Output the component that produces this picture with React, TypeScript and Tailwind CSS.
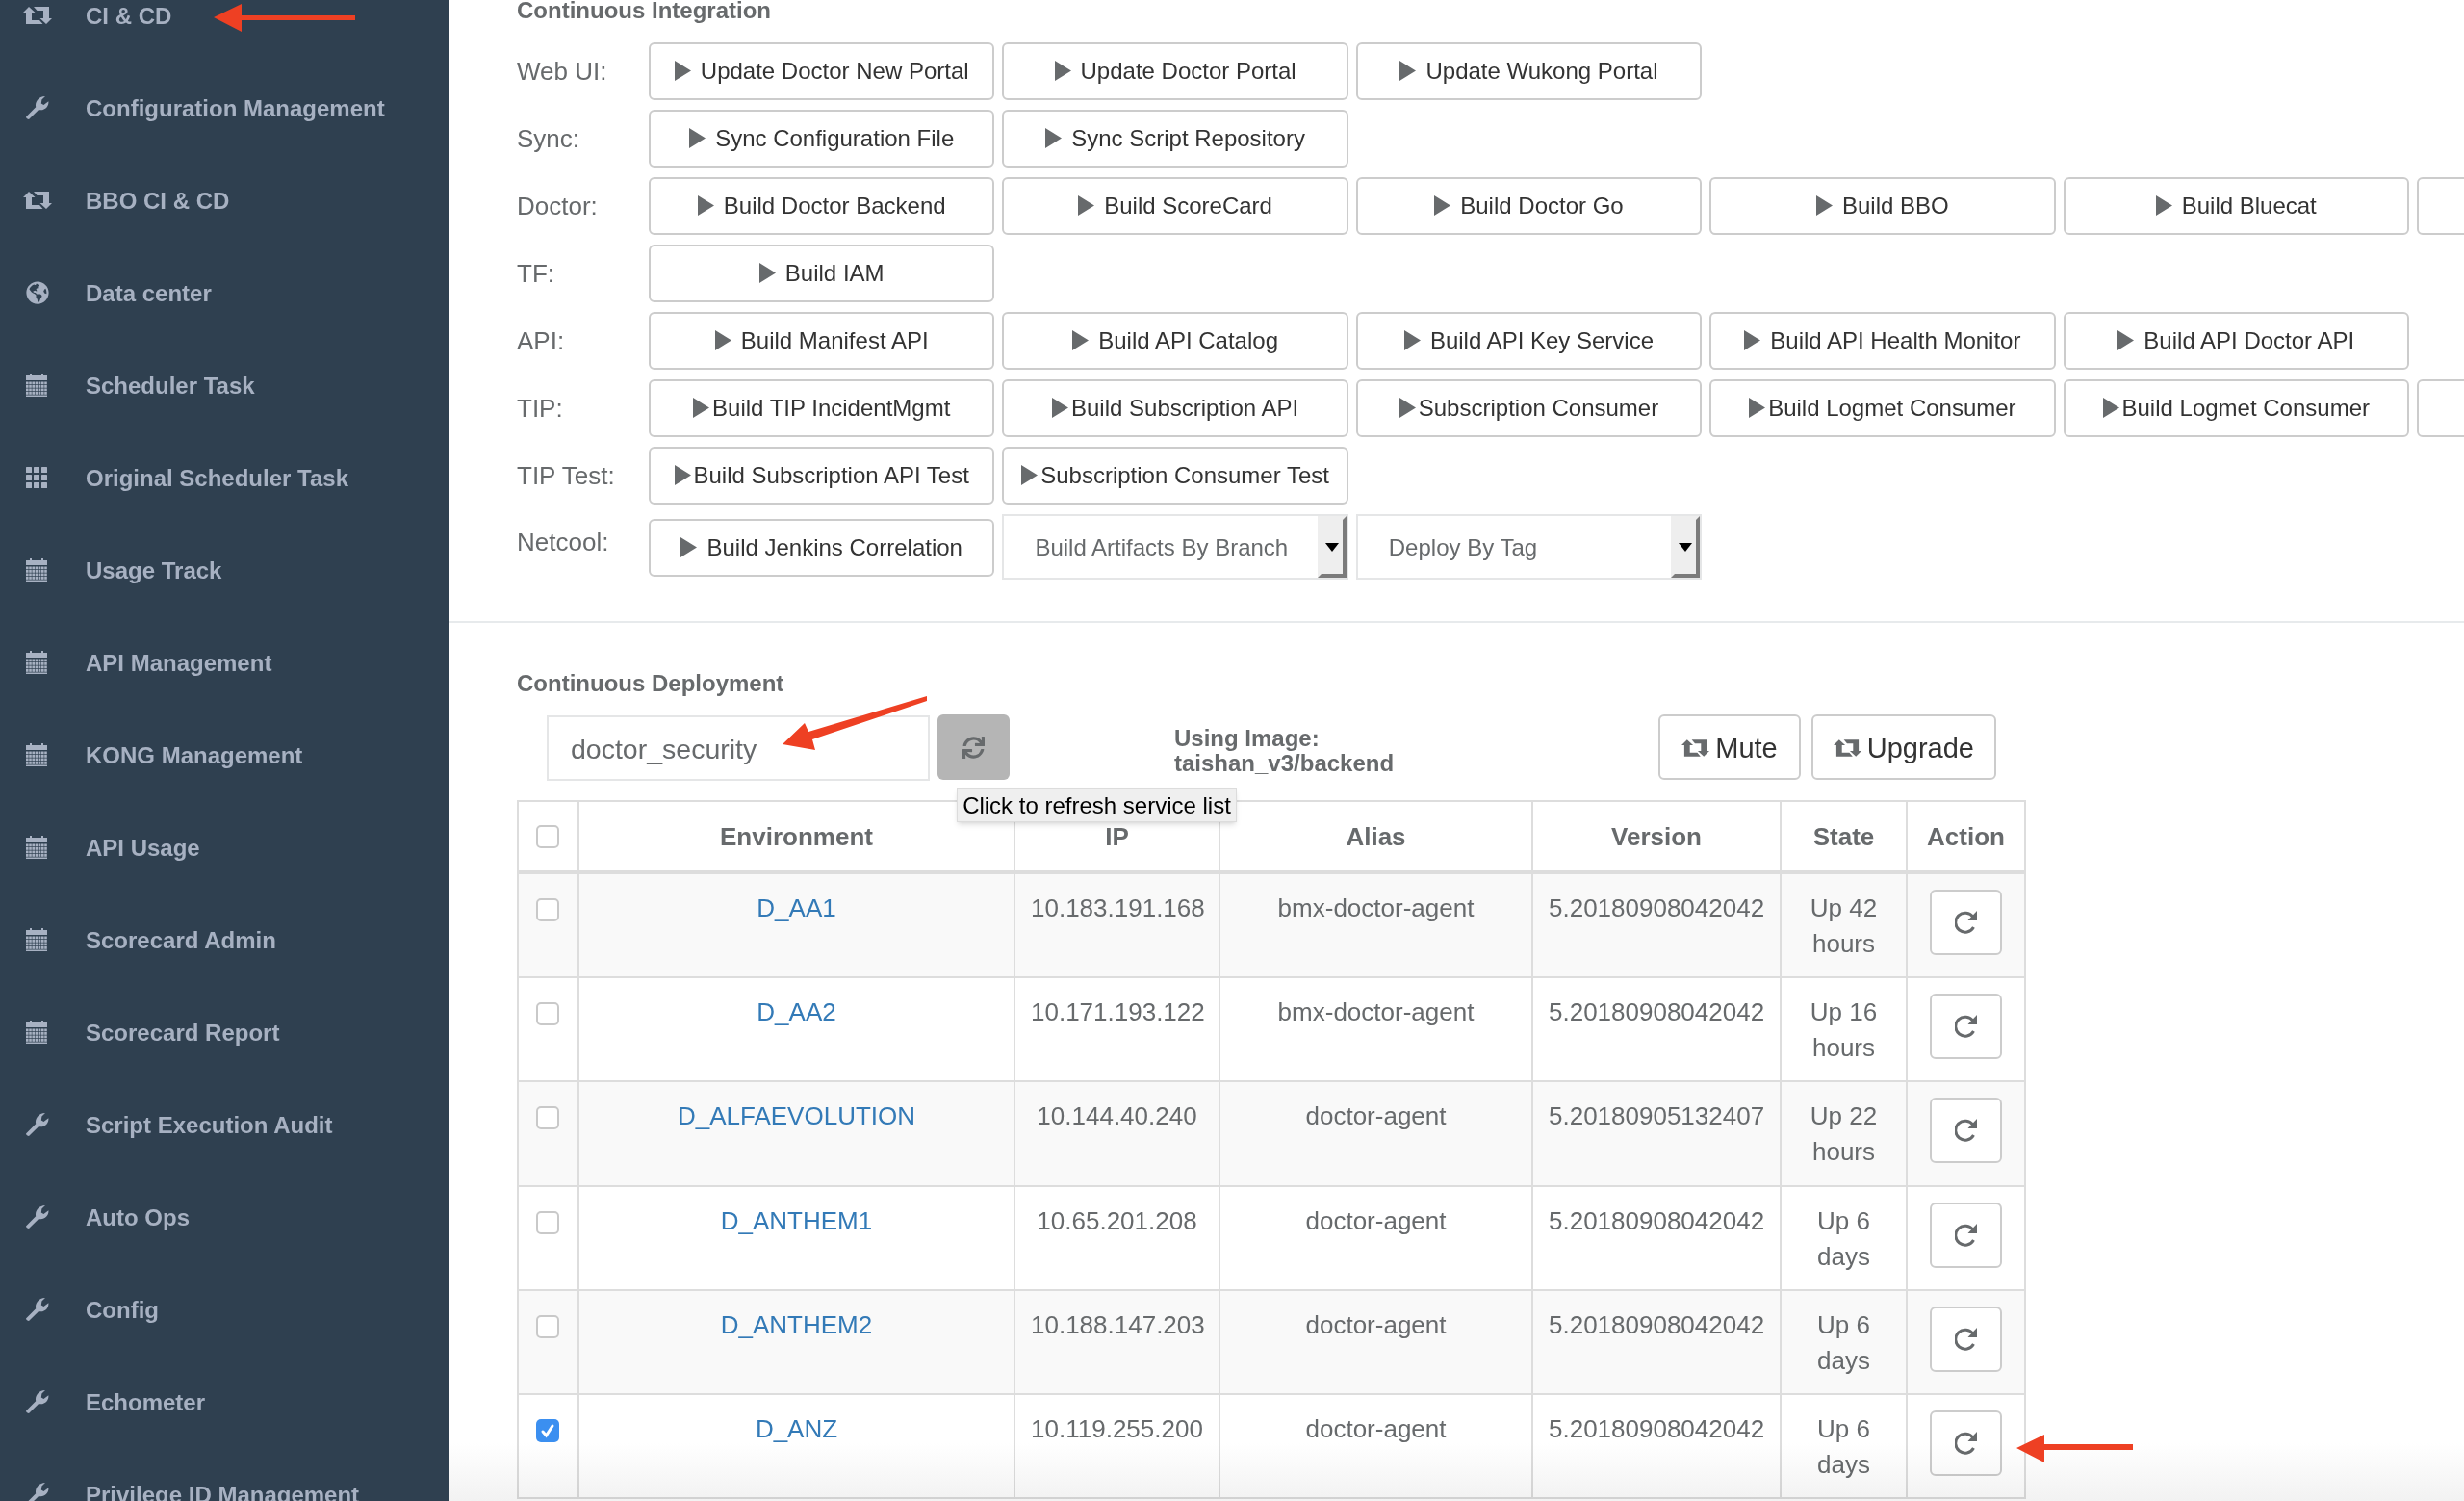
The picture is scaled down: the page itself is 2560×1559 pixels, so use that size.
import { FaGlobeAmericas, FaSync } from "react-icons/fa";

type IconName = "retweet" | "wrench" | "globe" | "calendar" | "grid";

const menu: { label: string; icon: IconName }[] = [
  { label: "CI & CD", icon: "retweet" },
  { label: "Configuration Management", icon: "wrench" },
  { label: "BBO CI & CD", icon: "retweet" },
  { label: "Data center", icon: "globe" },
  { label: "Scheduler Task", icon: "calendar" },
  { label: "Original Scheduler Task", icon: "grid" },
  { label: "Usage Track", icon: "calendar" },
  { label: "API Management", icon: "calendar" },
  { label: "KONG Management", icon: "calendar" },
  { label: "API Usage", icon: "calendar" },
  { label: "Scorecard Admin", icon: "calendar" },
  { label: "Scorecard Report", icon: "calendar" },
  { label: "Script Execution Audit", icon: "wrench" },
  { label: "Auto Ops", icon: "wrench" },
  { label: "Config", icon: "wrench" },
  { label: "Echometer", icon: "wrench" },
  { label: "Privilege ID Management", icon: "wrench" },
];

const buildRows: { label: string; tight?: boolean; items: string[] }[] = [
  { label: "Web UI:", items: ["Update Doctor New Portal", "Update Doctor Portal", "Update Wukong Portal"] },
  { label: "Sync:", items: ["Sync Configuration File", "Sync Script Repository"] },
  { label: "Doctor:", items: ["Build Doctor Backend", "Build ScoreCard", "Build Doctor Go", "Build BBO", "Build Bluecat", ""] },
  { label: "TF:", items: ["Build IAM"] },
  { label: "API:", items: ["Build Manifest API", "Build API Catalog", "Build API Key Service", "Build API Health Monitor", "Build API Doctor API"] },
  {
    label: "TIP:",
    tight: true,
    items: ["Build TIP IncidentMgmt", "Build Subscription API", "Subscription Consumer", "Build Logmet Consumer", "Build Logmet Consumer", ""],
  },
  { label: "TIP Test:", tight: true, items: ["Build Subscription API Test", "Subscription Consumer Test"] },
];

const services = [
  { env: "D_AA1", ip: "10.183.191.168", alias: "bmx-doctor-agent", version: "5.20180908042042", state: "Up 42 hours" },
  { env: "D_AA2", ip: "10.171.193.122", alias: "bmx-doctor-agent", version: "5.20180908042042", state: "Up 16 hours" },
  { env: "D_ALFAEVOLUTION", ip: "10.144.40.240", alias: "doctor-agent", version: "5.20180905132407", state: "Up 22 hours" },
  { env: "D_ANTHEM1", ip: "10.65.201.208", alias: "doctor-agent", version: "5.20180908042042", state: "Up 6 days" },
  { env: "D_ANTHEM2", ip: "10.188.147.203", alias: "doctor-agent", version: "5.20180908042042", state: "Up 6 days" },
  { env: "D_ANZ", ip: "10.119.255.200", alias: "doctor-agent", version: "5.20180908042042", state: "Up 6 days", checked: true },
];

function RetweetIcon({ className }: { className?: string }) {
  return (
    <svg viewBox="0 0 30 18" className={className} fill="currentColor">
      <path d="M0 6 6 0 12.500 6H9V14H17L20.500 18H3V6Z" />
      <path d="M11 0H27V12H30L24 18 17.500 12H21V4H14.500Z" />
    </svg>
  );
}

function SideIcon({ name }: { name: IconName }) {
  if (name === "retweet") return <RetweetIcon className="w-[30px] h-[18px]" />;
  if (name === "wrench") {
    return (
      <svg viewBox="0 0 24 24" className="ml-[3px] w-[24px] h-[24px]" fill="currentColor">
        <path d="M0 21.5 10.2 11.3C9 6 13 .2 20 0L16.4 3.6 15.8 7.6 18.4 9 23.4 5.2C24 10.800 18.800 15.600 13.200 14L3 24C1.800 24 0 23 0 21.500Z" />
      </svg>
    );
  }
  if (name === "globe") return <FaGlobeAmericas className="ml-[3px] w-[24px] h-[24px]" />;
  if (name === "grid") {
    return (
      <svg viewBox="0 0 22 22" className="ml-[3px] w-[22px] h-[22px]" fill="currentColor">
        {[0, 8, 16].map((y) =>
          [0, 8, 16].map((x) => <rect key={`${x}-${y}`} x={x} y={y} width="6" height="6" rx="0.5" />)
        )}
      </svg>
    );
  }
  return (
    <svg viewBox="0 0 22 24" className="ml-[3px] w-[22px] h-[24px]" fill="currentColor">
      <path d="M0 2H4V0H6V2H16V0H18V2H22V7H0Z" />
      {[8.5, 12, 15.5, 19].map((y) =>
        [0, 3.2, 6.4, 9.6, 12.8, 16, 19.2].map((x) => (
          <rect key={`${x}-${y}`} x={x} y={y} width="2.6" height="2.8" />
        ))
      )}
      <rect x="0" y="22.500" width="22" height="1.500" />
    </svg>
  );
}

function Sidebar() {
  return (
    <aside className="w-[467px] shrink-0 h-full overflow-hidden bg-[#2f4050]">
      <ul className="-mt-8">
        {menu.map((item) => (
          <li key={item.label} className="flex items-center h-24 pl-6 text-[#a7b1c2] font-bold text-[24px]">
            <span className="w-[65px] shrink-0 flex items-center">
              <SideIcon name={item.icon} />
            </span>
            {item.label}
          </li>
        ))}
      </ul>
    </aside>
  );
}

function PlayButton({ label, tight }: { label: string; tight?: boolean }) {
  return (
    <button
      className={`w-[359.4px] h-[60px] shrink-0 pb-[2px] flex items-center justify-center rounded-md border-2 border-[#cccccc] bg-white text-[24px] text-[#333333] ${
        tight ? "gap-[3px]" : "gap-[10px]"
      }`}
    >
      {label && (
        <svg viewBox="0 0 17 21" className="w-[17px] h-[21px] shrink-0 text-[#676a6c]" fill="currentColor">
          <polygon points="0,0 17,10.500 0,21" />
        </svg>
      )}
      {label}
    </button>
  );
}

function FakeSelect({ label }: { label: string }) {
  return (
    <div className="w-[359.4px] h-[68px] shrink-0 flex items-center justify-between border-2 border-[#e5e6e7] bg-white pl-[32px] text-[24px] text-[#676a6c]">
      {label}
      <span className="w-[30px] h-full flex items-center justify-center border-4 border-t-[#eeeeee] border-l-[#eeeeee] border-r-[#7b7b7b] border-b-[#7b7b7b] bg-[#eeeeee]">
        <svg viewBox="0 0 14 9" className="w-[14px] h-[9px] text-black" fill="currentColor">
          <polygon points="0,0 14,0 7,9" />
        </svg>
      </span>
    </div>
  );
}

function CheckBox({ checked }: { checked?: boolean }) {
  if (checked) {
    return (
      <span className="mx-auto w-6 h-6 rounded-[5px] bg-[#3b8ff0] flex items-center justify-center">
        <svg viewBox="0 0 24 24" className="w-6 h-6" fill="none" stroke="white" strokeWidth="3" strokeLinecap="round">
          <path d="M7 13 10.500 17 17 7" />
        </svg>
      </span>
    );
  }
  return <span className="block mx-auto w-6 h-6 rounded-[5px] border-2 border-[#c9c9c9] bg-white" />;
}

function ActionButton() {
  return (
    <button className="mx-auto w-[75px] h-[68px] flex items-center justify-center rounded-md border-2 border-[#cccccc] bg-white text-[#676a6c]">
      <svg viewBox="0 0 24 24" className="w-6 h-6" fill="none" stroke="currentColor" strokeWidth="3">
        <path d="M19.500 17A10 10 0 1 1 19 6.500" />
        <polygon points="23,0 23,10 13.500,10" fill="currentColor" stroke="none" />
      </svg>
    </button>
  );
}

function Annotations() {
  return (
    <svg className="absolute left-0 top-0 w-[2560px] h-[1559px] pointer-events-none z-20" viewBox="0 0 2560 1559" fill="#ee4023">
      <polygon points="222,18 251,4 251,16 369,16 369,21 251,21 251,33" />
      <polygon points="813,773 836,751 840,760 963,723 963,728 844,768 847,779" />
      <polygon points="2095,1504 2124,1490 2124,1500 2216,1500 2216,1506 2124,1506 2124,1519" />
    </svg>
  );
}

const th = "border-2 border-[#dddddd] border-b-4 h-[74px] align-middle text-center font-bold";
const td = "border-2 border-[#dddddd] px-4 pt-[17px] pb-[15px] align-top text-center";

export default function App() {
  return (
    <div
      className="relative w-[2560px] h-[1559px] flex overflow-hidden bg-white text-[26px] leading-[37px] text-[#676a6c]"
      style={{ fontFamily: '"Liberation Sans", Arial, sans-serif' }}
    >
      <Sidebar />

      <main className="flex-1 min-w-0 overflow-hidden">
        <section className="pl-[70px] -mt-2">
          <h3 className="font-bold text-[24px] mb-[15px]">Continuous Integration</h3>
          <div className="flex flex-col gap-[10px]">
            {buildRows.map((row) => (
              <div key={row.label} className="flex items-center">
                <span className="w-[137px] shrink-0">{row.label}</span>
                <div className="flex gap-2">
                  {row.items.map((item, i) => (
                    <PlayButton key={i} label={item} tight={row.tight} />
                  ))}
                </div>
              </div>
            ))}
            <div className="flex items-center">
              <span className="w-[137px] shrink-0 -mt-[10px]">Netcool:</span>
              <div className="flex items-center gap-2">
                <div className="mt-[2px]">
                  <PlayButton label="Build Jenkins Correlation" />
                </div>
                <FakeSelect label="Build Artifacts By Branch" />
                <FakeSelect label="Deploy By Tag" />
              </div>
            </div>
          </div>
        </section>

        <div className="h-[2px] bg-[#e7eaec] mt-[43px]" />

        <section className="pl-[70px] pt-[44px]">
          <h3 className="font-bold text-[24px] mb-[14px]">Continuous Deployment</h3>
          <div className="w-[1537px] pl-[31px] flex items-start">
            <div className="w-[398px] h-[68px] mt-px flex items-center border-2 border-[#e5e6e7] pl-[23px] pt-[2px] text-[28.500px]">
              doctor_security
            </div>
            <div className="relative ml-2">
              <button className="w-[75px] h-[68px] flex items-center justify-center rounded-md bg-[#b5b5b5] text-[#676a6c]">
                <FaSync className="w-[23px] h-[23px]" />
              </button>
              <div className="absolute left-[20px] top-[76px] z-10 w-[291px] h-[36px] flex items-center justify-center whitespace-nowrap bg-[#efefef] border border-[#dcdcdc] shadow-md text-[24px] text-black">
                Click to refresh service list
              </div>
            </div>
            <div className="ml-[171px] mt-[12px] font-bold text-[24px] leading-[26px]">
              Using Image:
              <br />
              taishan_v3/backend
            </div>
            <div className="ml-auto flex gap-[11px] text-[29px] text-[#333333]">
              <button className="h-[68px] px-[22px] pt-[2px] flex items-center gap-[6px] rounded-md border-2 border-[#cccccc]">
                <RetweetIcon className="w-[29px] h-[18px] text-[#676a6c]" />
                Mute
              </button>
              <button className="h-[68px] px-[21px] pt-[2px] flex items-center gap-[6px] rounded-md border-2 border-[#cccccc]">
                <RetweetIcon className="w-[29px] h-[18px] text-[#676a6c]" />
                Upgrade
              </button>
            </div>
          </div>

          <table className="mt-[20px] w-[1568px] table-fixed border-collapse">
            <colgroup>
              <col className="w-[63px]" />
              <col className="w-[453px]" />
              <col className="w-[213px]" />
              <col className="w-[325px]" />
              <col className="w-[258px]" />
              <col className="w-[131px]" />
              <col className="w-[123px]" />
            </colgroup>
            <thead>
              <tr>
                <th className={`${th} pr-[2px]`}>
                  <CheckBox />
                </th>
                <th className={`${th} pt-[2px]`}>Environment</th>
                <th className={`${th} pt-[2px]`}>IP</th>
                <th className={`${th} pt-[2px]`}>Alias</th>
                <th className={`${th} pt-[2px]`}>Version</th>
                <th className={`${th} pt-[2px]`}>State</th>
                <th className={`${th} pt-[2px]`}>Action</th>
              </tr>
            </thead>
            <tbody>
              {services.map((row, i) => (
                <tr key={row.env} className={`h-[108.300px] ${i % 2 === 0 ? "bg-[#f9f9f9]" : "bg-white"}`}>
                  <td className="border-2 border-[#dddddd] pt-[25px] pr-[2px] align-top">
                    <CheckBox checked={row.checked} />
                  </td>
                  <td className={td}>
                    <a className="text-[#337ab7]">{row.env}</a>
                  </td>
                  <td className={td}>{row.ip}</td>
                  <td className={td}>{row.alias}</td>
                  <td className={td}>{row.version}</td>
                  <td className={td}>{row.state}</td>
                  <td className="border-2 border-[#dddddd] p-4 align-top text-center">
                    <ActionButton />
                  </td>
                </tr>
              ))}
            </tbody>
          </table>
        </section>
      </main>

      <div className="absolute left-[467px] right-0 bottom-0 h-[60px] z-10 pointer-events-none mix-blend-multiply bg-gradient-to-b from-white to-[#f2f2f2]" />
      <Annotations />
    </div>
  );
}
